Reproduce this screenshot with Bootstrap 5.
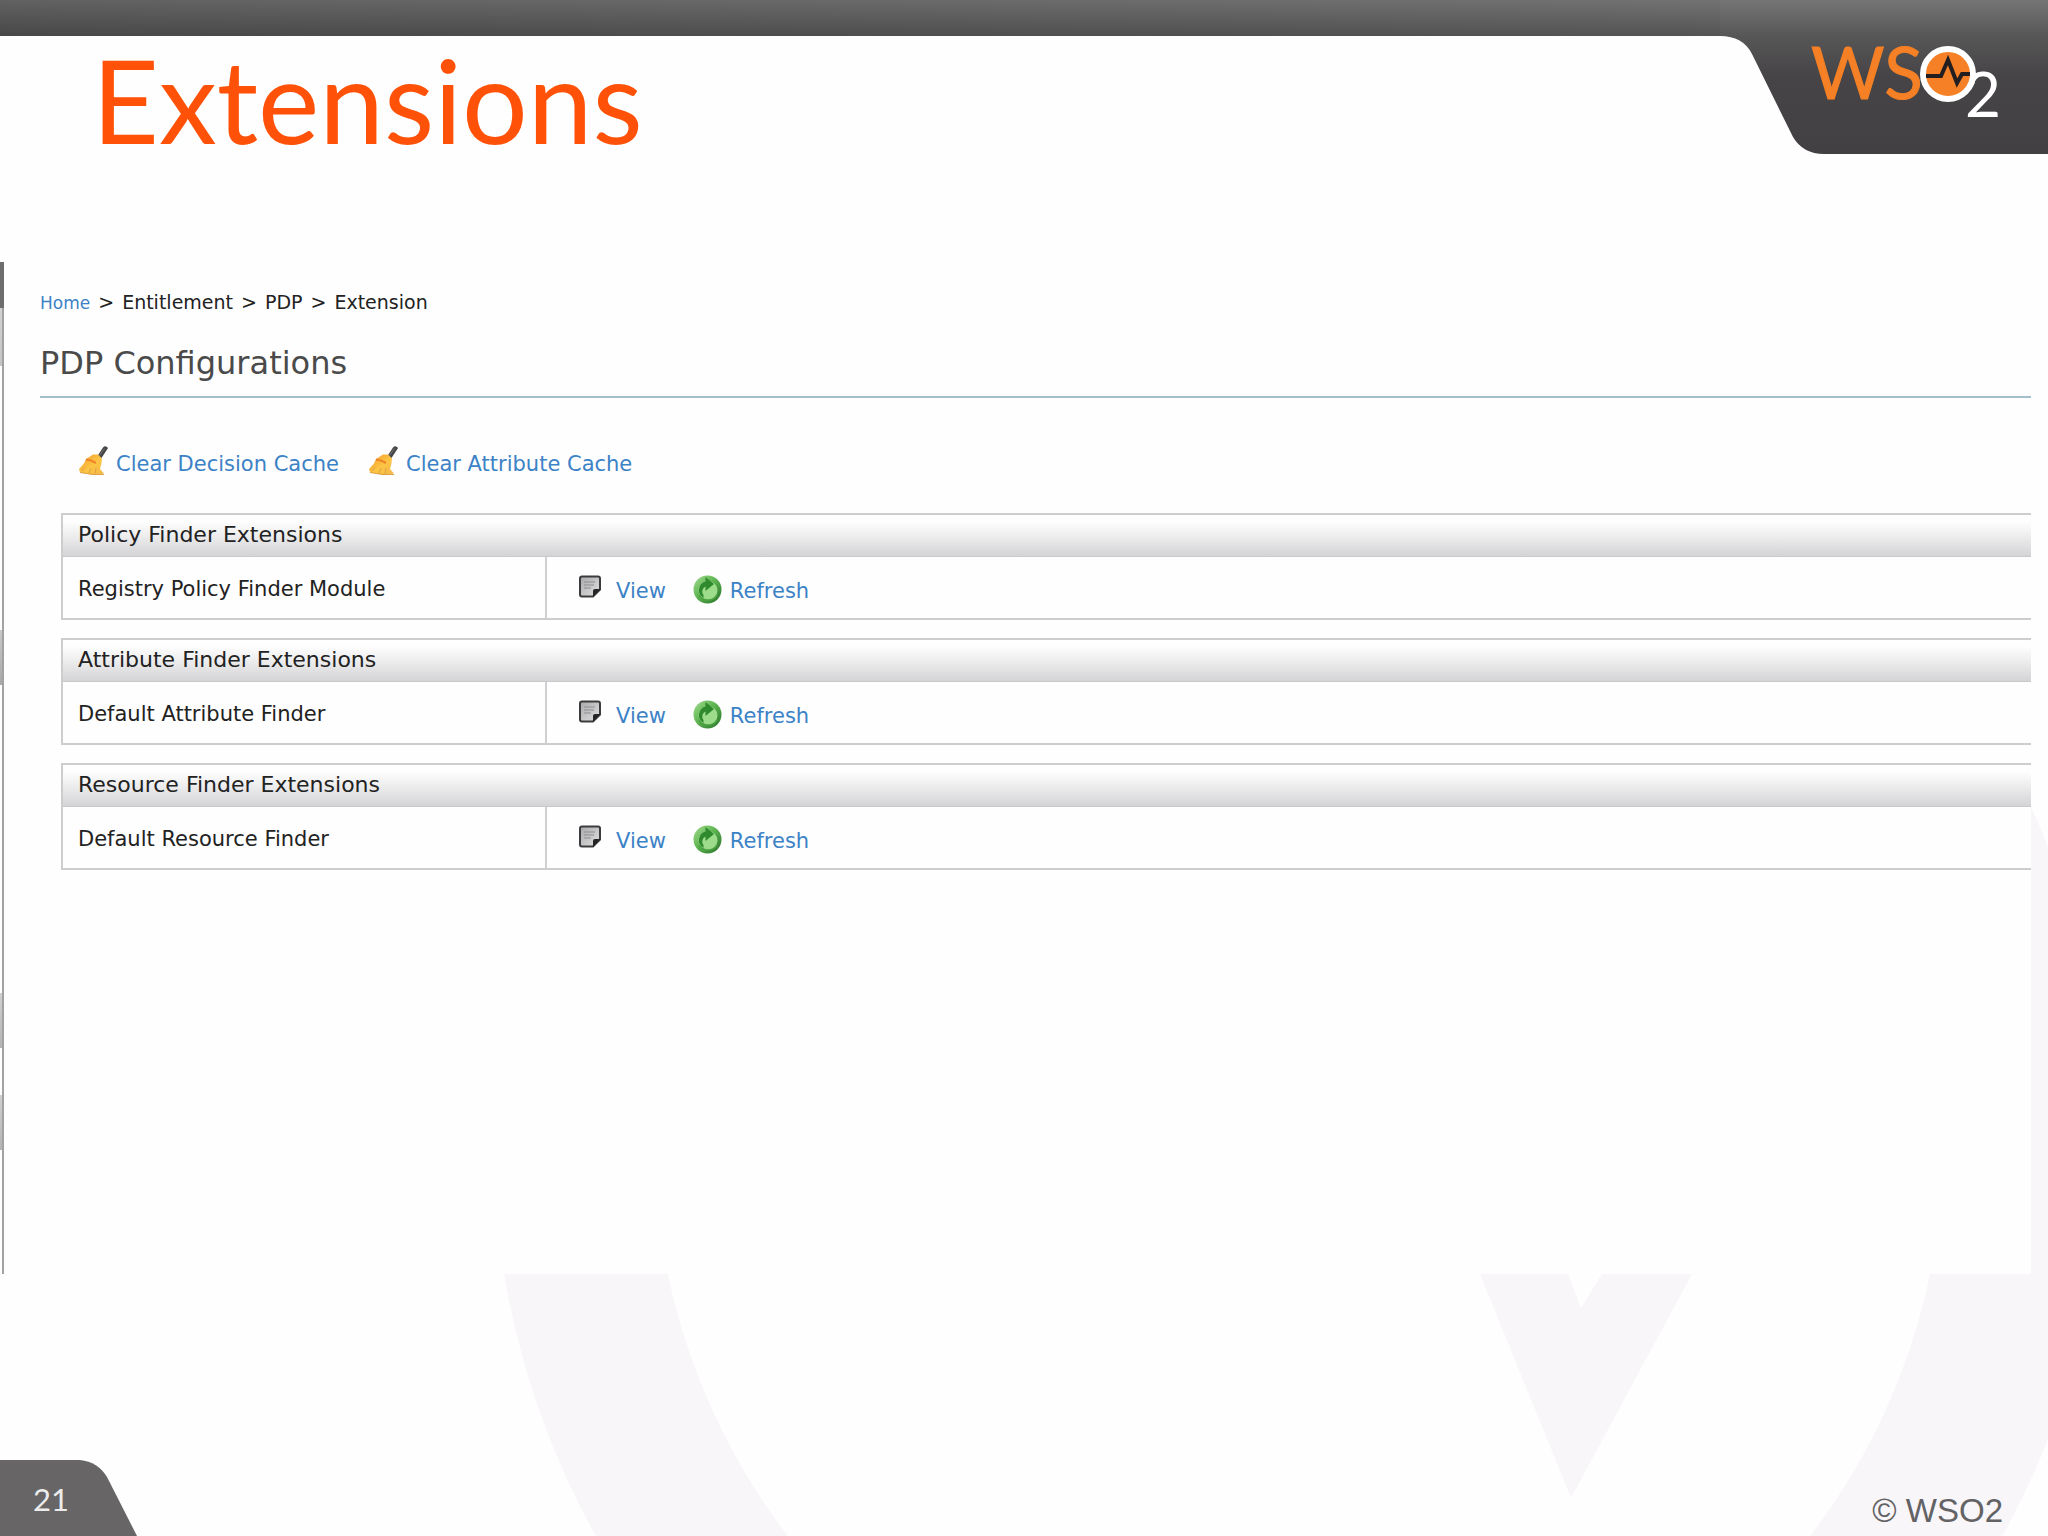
<!DOCTYPE html>
<html lang="en">
<head>
<meta charset="utf-8">
<meta name="viewport" content="width=device-width, initial-scale=1">
<title>Extensions</title>
<link rel="stylesheet" href="https://cdn.jsdelivr.net/npm/bootstrap@5.3.0/dist/css/bootstrap.min.css">
<style>
  body { background: #fefefe; color: #222; font-family: "DejaVu Sans", Verdana, sans-serif; font-size: 21px; line-height: 24px; }
  a { color: #3c82c6; text-decoration: none; }
  .slide { isolation: isolate; }
  .watermark { right: 0; bottom: 0; z-index: -1; }
  .slide-head { height: 262px; }
  .top-bar { height: 36px; background: linear-gradient(90deg, rgba(0,0,0,.17), rgba(0,0,0,0)), linear-gradient(#757575, #575657); }
  .brand-tab { top: 0; right: 0; }
  .slide-title { color: #ff5208; font-family: Lato, sans-serif; font-size: 116px; line-height: 127px; font-weight: 400; padding-left: 92px; margin: 0; }
  .panel { background: #fefefe; margin-right: 17px; }
  .edge { width: 4px; background:
    linear-gradient(#6d6d6d, #6d6d6d) 0 0 / 4px 46px no-repeat,
    linear-gradient(#a2a2a2, #a2a2a2) 2px 0 / 2px 100% no-repeat,
    linear-gradient(#d2d2d2, #c4c4c4) 0 46px / 2px 58px no-repeat,
    linear-gradient(#c8c8c8, #a8a8a8) 0 368px / 2px 55px no-repeat,
    linear-gradient(#d0d0d0, #b4b4b4) 0 731px / 2px 55px no-repeat,
    linear-gradient(#d0d0d0, #b4b4b4) 0 833px / 2px 55px no-repeat; }
  .panel-body { padding: 28px 0 0 36px; }
  .trail { --bs-breadcrumb-divider: ">"; --bs-breadcrumb-divider-color: #222; --bs-breadcrumb-item-active-color: #222; font-size: 19px; margin: 0 0 28px; }
  .trail a { font-size: 17px; }
  .config-title { color: #4a4a4a; font-size: 32px; line-height: 40px; font-weight: 400; padding-bottom: 13px; border-bottom: 2px solid #a3bfcd; margin: 0 0 48px; }
  .actions { gap: 30px; padding-left: 39px; margin-bottom: 37px; }
  .action { display: inline-flex; gap: 8px; height: 30px; }
  .action span { padding-top: 6px; }
  .row-links { gap: 27px; }
  .row-links .action span { padding-top: 4px; }
  .finders { margin-left: 21px; }
  .finder { width: 100%; border: 2px solid #cdcdd0; border-right: 0; border-collapse: separate; border-spacing: 0; margin-bottom: 18px; table-layout: fixed; }
  .finder th { font-weight: 400; }
  .finder thead th { font-size: 22px; padding: 8px 15px 9px; background: linear-gradient(#fefefe 15%, #f0f0f1 45%, #d4d4d6); border-bottom: 1px solid #c9c9cc; }
  .finder tbody th { padding: 20px 15px 17px; }
  .finder td { border-left: 2px solid #d0d0d3; padding: 18px 0 13px 32px; }
  .name-col { width: 482px; }
  .slide-foot { height: 262px; }
  .page-tab { width: 137px; height: 76px; }
  .page-no { left: 33px; bottom: 18px; color: #ececec; font-family: Lato, sans-serif; font-size: 31px; line-height: 38px; }
  .copy { color: #636264; font-family: "Liberation Sans", Arial, sans-serif; font-size: 33px; line-height: 38px; padding: 0 45px 6px 0; }
</style>
</head>
<body>
<svg width="0" height="0" class="position-absolute" aria-hidden="true">
  <defs>
    <linearGradient id="gold" x1="0" y1="0" x2="1" y2="1"><stop offset="0" stop-color="#f49a2c"/><stop offset=".55" stop-color="#fcc544"/><stop offset="1" stop-color="#f3b54a"/></linearGradient>
    <linearGradient id="paper" x1="0" y1="0" x2="1" y2="1"><stop offset="0" stop-color="#a9a9ab"/><stop offset="1" stop-color="#e2e2e3"/></linearGradient>
    <linearGradient id="leaf" x1="0" y1="0" x2="1" y2="1"><stop offset="0" stop-color="#a4dc92"/><stop offset=".45" stop-color="#5fb551"/><stop offset="1" stop-color="#256f27"/></linearGradient>
    <symbol id="broom" viewBox="0 0 29 29">
      <path d="M18.500 10 24 1.500q2.500-2.500 5 .5L22.500 12z" fill="#454547"/>
      <path d="M25.500 2.500 20.500 9.500" stroke="#77777a" stroke-width="1"/>
      <path d="M14 8.500 19 8.500 23 12.500 22.500 17 21 23 25 27.500 14 29 1 26.500 0 23 5 17.500 7 13z" fill="url(#gold)"/>
      <path d="M7 13.500 12 14.500 17 17" fill="none" stroke="#ee8427" stroke-width="2"/>
      <path d="M6 21 3 25M12 22 10 27M17 22 16 28M1 26.500 14 28.500H25" fill="none" stroke="#dfa244" stroke-width="1"/>
    </symbol>
    <symbol id="note" viewBox="0 0 29 29">
      <path d="M3 1.500H19Q21 1.500 21 3.500V14.500L14 21.500H3Q1 21.500 1 19.500V3.500Q1 1.500 3 1.500z" fill="url(#paper)" stroke="#3c3c3e" stroke-width="2"/>
      <path d="M5 7H16M5 10H15M5 13H12" stroke="#8d8d90" stroke-width="1"/>
      <path d="M14 22V16Q14 14 16 14H21.500z" fill="#252527"/>
    </symbol>
    <symbol id="refresh" viewBox="0 0 29 29">
      <circle cx="14.500" cy="14.500" r="14" fill="url(#leaf)"/>
      <circle cx="15" cy="15.500" r="9.500" fill="#9ddc8b"/>
      <path d="M10.500 23A9 9 0 0 1 12.500 6.500V2L21 9 12.500 16V11.500A5.500 5.500 0 0 0 10.500 20z" fill="#2f8a2d"/>
      <path d="M6 20A10.500 10.500 0 0 0 24 20" fill="none" stroke="#4da344" stroke-width="1.500"/>
    </symbol>
  </defs>
</svg>

<div class="slide position-relative d-flex flex-column min-vh-100 overflow-hidden">
  <svg class="watermark position-absolute" width="1560" height="1210" viewBox="488 326 1560 1210" aria-hidden="true">
    <circle cx="1299" cy="1143" r="725" fill="none" stroke="#f8f6f9" stroke-width="161"/>
    <path d="M1480 1274H1568L1581 1308 1602 1274H1692L1571 1498z" fill="#f8f6f9"/>
  </svg>

  <header class="slide-head position-relative">
    <div class="top-bar"></div>
    <svg class="brand-tab position-absolute" width="328" height="154" viewBox="1720 0 328 154" role="img" aria-label="WSO2">
      <defs><linearGradient id="steel" x1="0" y1="0" x2="0" y2="1"><stop offset="0" stop-color="#757575"/><stop offset=".24" stop-color="#575657"/><stop offset=".5" stop-color="#464446"/><stop offset="1" stop-color="#424043"/></linearGradient></defs>
      <path d="M1720 0H2048V154H1824Q1803 154 1793 137L1752 54Q1743 36 1720 36z" fill="url(#steel)"/>
      <text x="1811" y="99" font-family="Lato, sans-serif" font-size="71" fill="#f58025" stroke="#f58025" stroke-width="1">WS</text>
      <text x="1965" y="117" font-family="Lato, sans-serif" font-size="62" fill="#fff">2</text>
      <circle cx="1948" cy="74" r="25" fill="#f58025" stroke="#fff" stroke-width="6"/>
      <path d="M1926 76H1941L1948 60 1957 83 1962 74H1970" fill="none" stroke="#231f20" stroke-width="4"/>
    </svg>
    <h1 class="slide-title">Extensions</h1>
  </header>

  <main class="panel d-flex flex-grow-1">
    <div class="edge flex-shrink-0"></div>
    <div class="panel-body flex-grow-1">
      <nav aria-label="breadcrumb">
        <ol class="breadcrumb trail">
          <li class="breadcrumb-item"><a href="#">Home</a></li>
          <li class="breadcrumb-item">Entitlement</li>
          <li class="breadcrumb-item">PDP</li>
          <li class="breadcrumb-item active" aria-current="page">Extension</li>
        </ol>
      </nav>
      <h2 class="config-title">PDP Configurations</h2>
      <div class="actions d-flex">
        <a class="action" href="#"><svg width="29" height="29" aria-hidden="true"><use href="#broom"/></svg><span>Clear Decision Cache</span></a>
        <a class="action" href="#"><svg width="29" height="29" aria-hidden="true"><use href="#broom"/></svg><span>Clear Attribute Cache</span></a>
      </div>
      <div class="finders">
        <table class="finder">
          <colgroup><col class="name-col"><col></colgroup>
          <thead><tr><th colspan="2" scope="colgroup">Policy Finder Extensions</th></tr></thead>
          <tbody><tr><th scope="row">Registry Policy Finder Module</th><td><div class="row-links d-flex">
            <a class="action" href="#"><svg width="29" height="29" aria-hidden="true"><use href="#note"/></svg><span>View</span></a>
            <a class="action" href="#"><svg width="29" height="29" aria-hidden="true"><use href="#refresh"/></svg><span>Refresh</span></a>
          </div></td></tr></tbody>
        </table>
        <table class="finder">
          <colgroup><col class="name-col"><col></colgroup>
          <thead><tr><th colspan="2" scope="colgroup">Attribute Finder Extensions</th></tr></thead>
          <tbody><tr><th scope="row">Default Attribute Finder</th><td><div class="row-links d-flex">
            <a class="action" href="#"><svg width="29" height="29" aria-hidden="true"><use href="#note"/></svg><span>View</span></a>
            <a class="action" href="#"><svg width="29" height="29" aria-hidden="true"><use href="#refresh"/></svg><span>Refresh</span></a>
          </div></td></tr></tbody>
        </table>
        <table class="finder">
          <colgroup><col class="name-col"><col></colgroup>
          <thead><tr><th colspan="2" scope="colgroup">Resource Finder Extensions</th></tr></thead>
          <tbody><tr><th scope="row">Default Resource Finder</th><td><div class="row-links d-flex">
            <a class="action" href="#"><svg width="29" height="29" aria-hidden="true"><use href="#note"/></svg><span>View</span></a>
            <a class="action" href="#"><svg width="29" height="29" aria-hidden="true"><use href="#refresh"/></svg><span>Refresh</span></a>
          </div></td></tr></tbody>
        </table>
      </div>
    </div>
  </main>

  <footer class="slide-foot d-flex justify-content-between align-items-end">
    <div class="page-tab position-relative">
      <svg class="d-block" width="137" height="76" viewBox="0 0 137 76" aria-hidden="true"><path d="M0 0H80Q98 2 107 17L137 76H0z" fill="#676566"/></svg>
      <span class="page-no position-absolute">21</span>
    </div>
    <div class="copy">© WSO2</div>
  </footer>
</div>
<script src="https://cdn.jsdelivr.net/npm/bootstrap@5.3.0/dist/js/bootstrap.bundle.min.js"></script>
</body>
</html>
